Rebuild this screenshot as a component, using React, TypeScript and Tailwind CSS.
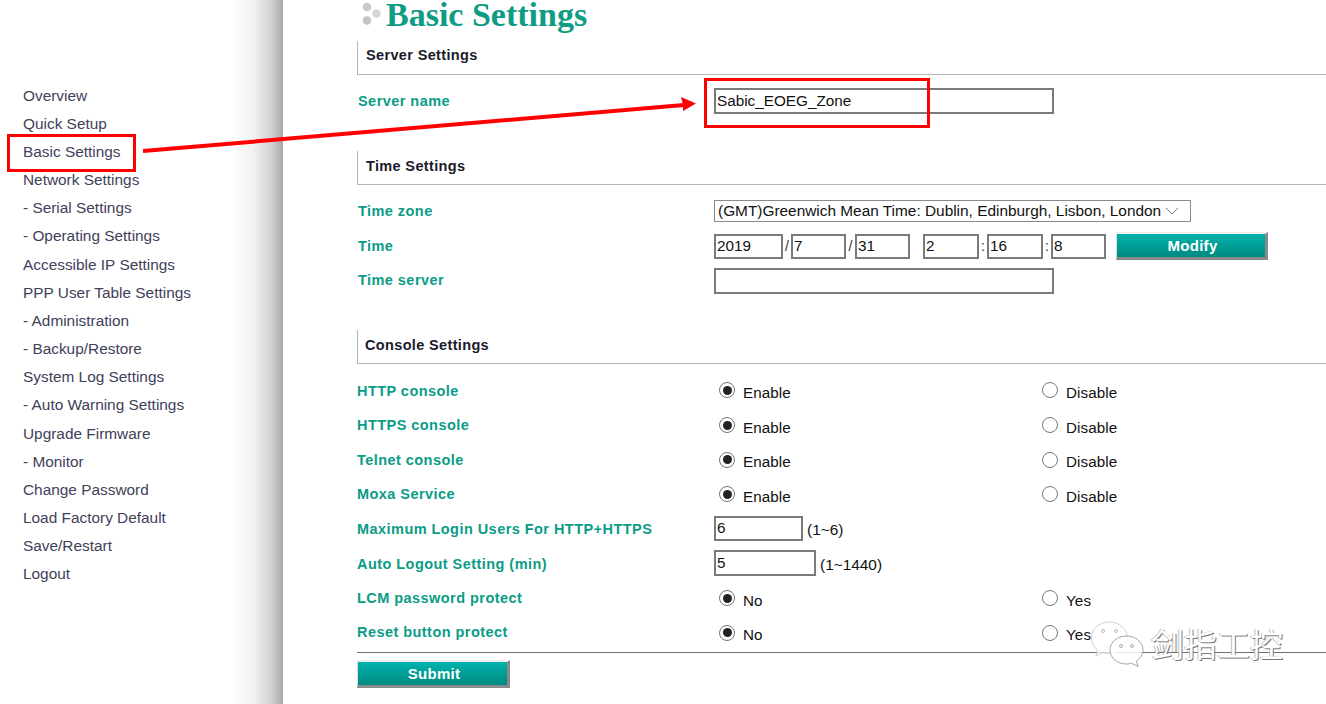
import React from "react";

const menu = [
  "Overview", "Quick Setup", "Basic Settings", "Network Settings", "- Serial Settings", "- Operating Settings",
  "Accessible IP Settings", "PPP User Table Settings", "- Administration", "- Backup/Restore", "System Log Settings",
  "- Auto Warning Settings", "Upgrade Firmware", "- Monitor", "Change Password", "Load Factory Default", "Save/Restart", "Logout",
];

function Radio({ on, label }: { on?: boolean; label: string }) {
  return (
    <div className="flex items-center h-full">
      <span className="w-4 h-4 rounded-full border border-[#767676] bg-white flex items-center justify-center shrink-0 -translate-y-[3px]">
        {on && <span className="w-[9px] h-[9px] rounded-full bg-[#222]" />}
      </span>
      <span className="ml-2 text-[15.2px] text-[#111] tracking-[0.1px]">{label}</span>
    </div>
  );
}

function Header({ title, className }: { title: string; className: string }) {
  return (
    <div className={`h-[34px] border-l border-b border-[#b5b5b5] flex items-center text-[14.5px] font-bold text-[#1a1a2a] tracking-[0.35px] ${className}`}>
      {title}
    </div>
  );
}

function Label({ children, className = "" }: { children: React.ReactNode; className?: string }) {
  return <div className={`w-[357px] shrink-0 text-[14.5px] font-bold text-[#0a9c86] tracking-[0.45px] ${className}`}>{children}</div>;
}

function Box({ value, w, h = "h-[25px]", className = "" }: { value?: string; w: string; h?: string; className?: string }) {
  return (
    <input
      readOnly
      defaultValue={value}
      className={`${w} ${h} border-2 border-[#7a7a7a] bg-white pl-[1px] pb-[1px] text-[15.3px] text-[#111] outline-none ${className}`}
    />
  );
}

function RadioRow({ label, a, b, labelClass = "" }: { label: string; a: string; b: string; labelClass?: string }) {
  return (
    <div className="flex items-center h-[34.6px]">
      <Label className={labelClass}>{label}</Label>
      <div className="w-[328px] pl-[5px] h-full translate-y-[2px]"><Radio on label={a} /></div>
      <div className="h-full translate-y-[2px]"><Radio label={b} /></div>
    </div>
  );
}

function Btn({ text, w, h }: { text: string; w: string; h: string }) {
  return (
    <button className={`${w} ${h} pt-[1px] pl-[3px] bg-[linear-gradient(to_bottom,#00b3ae,#008a80)] border-t-2 border-t-[#eeeeee] border-l border-l-[#dddddd] border-r-[3px] border-r-[#8a8a8a] border-b-[3px] border-b-[#8a8a8a] text-white font-bold text-[15px] tracking-[0.3px]`}>
      {text}
    </button>
  );
}

function Sep({ c, className }: { c: string; className: string }) {
  return <span className={`text-[14px] text-[#333] text-center ${className}`}>{c}</span>;
}

export default function App() {
  return (
    <div className="relative w-[1326px] h-[704px] overflow-hidden bg-white flex font-['Liberation_Sans',Arial,sans-serif]">
      <aside className="w-[283px] h-full shrink-0 pt-[81px] pl-[23px] bg-[linear-gradient(to_right,#ffffff_82%,#f0f0f0_90%,#d0d0d0_96%,#a8a8aa_100%)]">
        {menu.map((m) => (
          <div key={m} className="h-[28.18px] flex items-center text-[15.4px] text-[#41415a] whitespace-nowrap">{m}</div>
        ))}
      </aside>

      <main className="flex-1 pl-[74px]">
        <div className="h-[41px] -mb-px flex items-start">
          <svg width="22" height="26" viewBox="0 0 22 26" className="ml-[4px] mt-[1px] shrink-0">
            <circle cx="6" cy="6" r="4.3" fill="#c9c9c9" />
            <circle cx="15.500" cy="12.500" r="4.3" fill="#d6d6d6" />
            <circle cx="6" cy="19.500" r="4.3" fill="#c4c4c4" />
          </svg>
          <h1 className="ml-[3px] font-['Liberation_Serif',serif] font-bold text-[34px] leading-[30px] text-[#0e9c84] whitespace-nowrap">Basic Settings</h1>
        </div>

        <Header title="Server Settings" className="mt-[1px] pl-2 pb-[4px]" />
        <div className="flex items-center mt-[13px] h-[26px]">
          <Label className="pl-[1px] translate-y-[1px]">Server name</Label>
          <Box value="Sabic_EOEG_Zone" w="w-[340px]" h="h-[26px]" />
        </div>

        <Header title="Time Settings" className="mt-[37px] pl-2 pb-[2px]" />
        <div className="flex items-center mt-[15px] h-[22px]">
          <Label className="pl-[1px] translate-y-[1px]">Time zone</Label>
          <div className="w-[477px] h-[22px] border border-[#8a8a8a] flex items-center justify-between pl-[3px] pr-[11px] text-[15.4px] text-[#111] whitespace-nowrap">
            <span>(GMT)Greenwich Mean Time: Dublin, Edinburgh, Lisbon, London</span>
            <svg width="14" height="8" viewBox="0 0 14 8" className="shrink-0"><path d="M1 1l6 6 6-6" fill="none" stroke="#777" strokeWidth="1" /></svg>
          </div>
        </div>
        <div className="flex items-center mt-[10px] h-[28px]">
          <Label className="pl-[1px] translate-y-[1px]">Time</Label>
          <Box value="2019" w="w-[69px]" />
          <Sep c="/" className="w-[8px]" />
          <Box value="7" w="w-[55px]" />
          <Sep c="/" className="w-[9px]" />
          <Box value="31" w="w-[55px]" />
          <div className="w-[13px]" />
          <Box value="2" w="w-[56px]" />
          <Sep c=":" className="w-[8px]" />
          <Box value="16" w="w-[56px]" />
          <Sep c=":" className="w-[8px]" />
          <Box value="8" w="w-[55px]" />
          <div className="w-[10px]" />
          <Btn text="Modify" w="w-[152px]" h="h-[28px]" />
        </div>
        <div className="flex items-center mt-[8px] h-[26px]">
          <Label className="pl-[1px]">Time server</Label>
          <Box w="w-[340px]" h="h-[26px]" />
        </div>

        <Header title="Console Settings" className="mt-[36px] pl-[7px] pb-[2px]" />
        <div className="h-[10.2px]" />
        <RadioRow label="HTTP console" a="Enable" b="Disable" />
        <RadioRow label="HTTPS console" a="Enable" b="Disable" />
        <RadioRow label="Telnet console" a="Enable" b="Disable" />
        <RadioRow label="Moxa Service" a="Enable" b="Disable" />
        <div className="flex items-center h-[34.6px]">
          <Label>Maximum Login Users For HTTP+HTTPS</Label>
          <Box value="6" w="w-[89px]" className="-translate-y-[1px]" />
          <span className="ml-[4px] text-[15.4px] text-[#111]">(1~6)</span>
        </div>
        <div className="flex items-center h-[34.6px]">
          <Label>Auto Logout Setting (min)</Label>
          <Box value="5" w="w-[102px]" h="h-[26px]" className="-translate-y-[1px]" />
          <span className="ml-[4px] text-[15.4px] text-[#111]">(1~1440)</span>
        </div>
        <RadioRow label="LCM password protect" a="No" b="Yes" />
        <RadioRow label="Reset button protect" a="No" b="Yes" labelClass="-translate-y-[1px]" />
        <div className="border-t border-[#6f6f6f] mt-[1px] pt-[7px]">
          <Btn text="Submit" w="w-[153px]" h="h-[28px]" />
        </div>
      </main>

      {/* annotations */}
      <div className="absolute left-[7px] top-[134px] w-[129px] h-[38px] border-[3px] border-[#ff0000]" />
      <div className="absolute left-[704px] top-[78px] w-[226px] h-[50px] border-[3px] border-[#ff0000]" />
      <svg className="absolute left-0 top-0 pointer-events-none" width="1326" height="704" viewBox="0 0 1326 704">
        <path d="M143 151 L684 105" stroke="#ff0000" strokeWidth="4" fill="none" />
        <path d="M696 103.500 L681 97 L683 104.800 L683 111 Z" fill="#ff0000" />
      </svg>

      {/* watermark */}
      <div className="absolute left-[1090px] top-[620px] flex items-start">
        <svg width="56" height="48" viewBox="0 0 56 48">
          <path d="M19.500 2C9.500 2 1.500 9 1.500 18c0 5 2.500 9 6 12l-1.500 6 7-3.500c2 .6 4 1 6.500 1 10 0 18-7 18-15.500S29.500 2 19.500 2Z" fill="#ffffff" fillOpacity="0.75" stroke="#c4c4c4" strokeWidth="0.8" />
          <path d="M36.500 16C27.500 16 20 22 20 30s7.500 14 16.500 14c2 0 3.500-.2 5-.7l6.500 3.200-1.500-5.500c3.500-2.500 6.500-6.500 6.500-11 0-8-7.500-14-16.500-14Z" fill="#ffffff" fillOpacity="0.85" stroke="#8f8f8f" strokeWidth="0.8" />
          <circle cx="13" cy="11" r="1.500" fill="none" stroke="#999" strokeWidth="0.7" />
          <circle cx="26" cy="11" r="1.500" fill="none" stroke="#999" strokeWidth="0.7" />
          <circle cx="31" cy="26" r="1.500" fill="none" stroke="#888" strokeWidth="0.7" />
          <circle cx="42" cy="26" r="1.500" fill="none" stroke="#888" strokeWidth="0.7" />
        </svg>
        <span className="ml-[5px] mt-[7px] font-['Noto_Sans_CJK_SC',sans-serif] text-[33px] leading-none text-white [text-shadow:1px_1px_0_#777,-1px_0_0_#bbb]">剑指工控</span>
      </div>
    </div>
  );
}
